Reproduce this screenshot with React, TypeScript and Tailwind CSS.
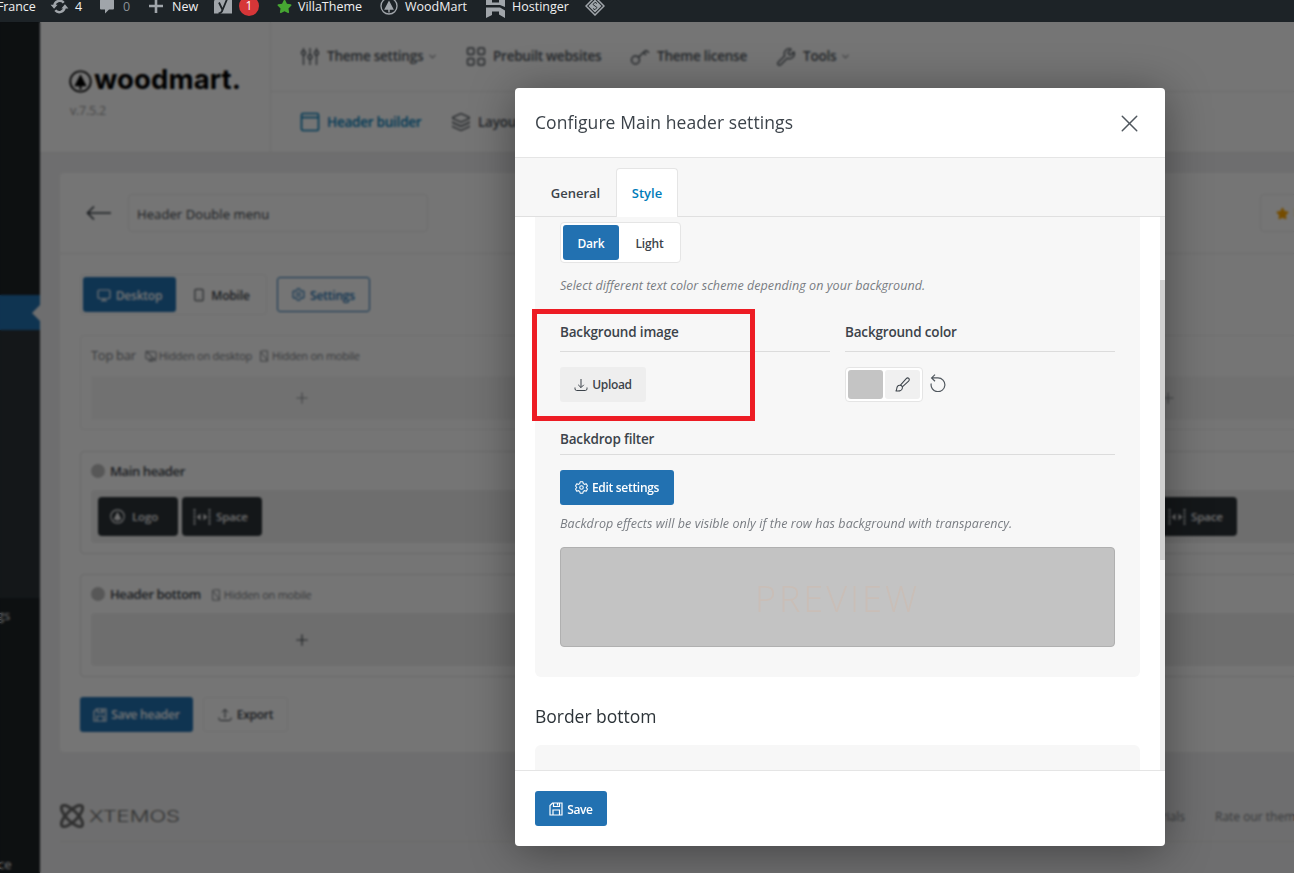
import React from "react";
import { ChevronDown, Layers, Plus, Smartphone, Wrench, X } from "lucide-react";
import { FaStar } from "react-icons/fa";

type P = { className?: string };

const TreeIcon = ({ className = "" }: P) => (
  <svg viewBox="0 0 24 24" className={className} fill="none" stroke="currentColor" strokeWidth="1.800">
    <circle cx="12" cy="12" r="10.7" />
    <path d="M12 4.500 18.500 17H13v3.500h-2V17H5.500z" fill="currentColor" stroke="none" />
  </svg>
);

const GearIcon = ({ className = "" }: P) => (
  <svg viewBox="0 0 24 24" className={className} fill="none" stroke="currentColor" strokeWidth="2" strokeLinejoin="round">
    <path d="M9.500 1.500h5l.8 3.400 2.200 1.300 3.300-1 2.200 4L20.700 12l2.300 2.800-2.200 4-3.300-1-2.200 1.300-.8 3.400h-5l-.8-3.400-2.200-1.300-3.300 1-2.200-4L3.300 12 1 9.200l2.200-4 3.300 1 2.200-1.300z" />
    <circle cx="12" cy="12" r="3.300" />
  </svg>
);

const SaveIcon = ({ className = "" }: P) => (
  <svg viewBox="0 0 14 14" className={className} fill="none" stroke="currentColor" strokeWidth="1.200">
    <path d="M3.500 1h9.500v12H1V3.500zM4.500 1v3.500h6V1M8.500 1.500v2M4 13V8h6.500v5" />
  </svg>
);

const TrayIcon = ({ up = false, className = "" }: P & { up?: boolean }) => (
  <svg viewBox="0 0 14 14" className={className} fill="none" stroke="currentColor" strokeWidth="1">
    <path d="M1 9.500v1.300q0 1.700 1.700 1.700h8.600q1.700 0 1.700-1.700V9.500" />
    {up ? <path d="M7 10V1.500M4 4.300 7 1.300l3 3" /> : <path d="M7 1v8.500M4.200 6.800 7 9.600l2.800-2.800" />}
  </svg>
);

const SlidersIcon = ({ className = "" }: P) => (
  <svg viewBox="0 0 20 20" className={className} fill="none" stroke="currentColor" strokeWidth="1.300">
    <path d="M3.500 1v3M3.500 8v10M10 1v7M10 12v6M16.500 1v3M16.500 8v10" />
    <circle cx="3.500" cy="6" r="2" />
    <circle cx="10" cy="10" r="2" />
    <circle cx="16.500" cy="6" r="2" />
  </svg>
);

const GridIcon = ({ className = "" }: P) => (
  <svg viewBox="0 0 20 20" className={className} fill="none" stroke="currentColor" strokeWidth="1.500">
    <rect x="1.500" y="1" width="6.500" height="6.500" rx="1.500" />
    <rect x="12" y="1" width="6.500" height="6.500" rx="1.500" />
    <rect x="1.500" y="11.500" width="6.500" height="6.500" rx="1.500" />
    <rect x="12" y="11.500" width="6.500" height="6.500" rx="1.500" />
  </svg>
);

const KeyIcon = ({ className = "" }: P) => (
  <svg viewBox="0 0 20 20" className={className} fill="none" stroke="currentColor" strokeWidth="1.500">
    <circle cx="5.500" cy="13" r="4" />
    <path d="M8.500 10.200 14.500 4.500q1.500-1.300 3 0l1.500 1.300M13.500 5.500l2.500 2.500" />
  </svg>
);

const WindowIcon = ({ className = "" }: P) => (
  <svg viewBox="0 0 20 20" className={className} fill="none" stroke="currentColor" strokeWidth="1.600">
    <rect x="1.500" y="1.500" width="17" height="17" rx="1.500" />
    <path d="M1.500 5.500h17" />
  </svg>
);

const MonitorIcon = ({ off = false, className = "" }: P & { off?: boolean }) => (
  <svg viewBox="0 0 14 14" className={className} fill="none" stroke="currentColor" strokeWidth="1.200">
    <rect x="1" y="2" width="12" height="8.500" rx="1.300" />
    <path d="M4 12.700h6M7 10.500v2" />
    {off && <path d="m1 1 12 12" />}
  </svg>
);

const PhoneOffIcon = ({ className = "" }: P) => (
  <svg viewBox="0 0 14 14" className={className} fill="none" stroke="currentColor" strokeWidth="1.100">
    <path d="M3 2.500V13h8V1H4M2.500 1l9 12" />
  </svg>
);

const SpaceIcon = ({ className = "" }: P) => (
  <svg viewBox="0 0 18 18" className={className} fill="none" stroke="currentColor" strokeWidth="1.700">
    <path d="M1.500 1v16M16.500 1v16" strokeDasharray="2.200 1.200" />
    <path d="M7.500 5.500 3.800 9l3.700 3.500zM10.500 5.500 14.200 9l-3.700 3.500z" fill="currentColor" stroke="none" />
  </svg>
);

const BrushIcon = ({ className = "" }: P) => (
  <svg viewBox="0 0 16 16" className={className} fill="none" stroke="currentColor" strokeWidth="1.100" strokeLinejoin="round">
    <path d="M1 14.800c1.300-1 .4-3 1.600-4.800 1.200-1.700 4-1.800 5 0 .9 1.900-.2 4.300-2.600 4.800-1.300.3-2.700.2-4 0z" />
    <path d="M5.800 8.600 12 1.700c1-1 2-.8 2.700-.2.700.8.700 1.800-.2 2.800L7.800 10.500" />
  </svg>
);

const ResetIcon = ({ className = "" }: P) => (
  <svg viewBox="0 0 16 18" className={className} fill="none" stroke="currentColor" strokeWidth="1.200">
    <path d="M1.200 9.500A6.900 6.900 0 1 0 8 3.900H1.800M5 .6 1.600 3.900 5 7.200" />
  </svg>
);

const UpdateIcon = ({ className = "" }: P) => (
  <svg viewBox="0 0 20 16" className={className} fill="none" stroke="currentColor" strokeWidth="2.600">
    <path d="M4.500 7a5.700 5.700 0 0 1 10-3M15.500 9a5.700 5.700 0 0 1-10 3" />
    <path d="M.5 6h7.500L4.200 10.500zM19.500 10H12l3.800-4.500z" fill="currentColor" stroke="none" />
  </svg>
);

const AdminBar = () => (
  <header className="relative z-10 h-[22px] shrink-0 overflow-hidden bg-[#1d2327]">
    <div className="-mt-[9px] flex h-8 items-center whitespace-nowrap text-[12.500px] text-[#f0f0f1]">
      <span className="-ml-[3px] w-[53px] tracking-[-0.1px]">France</span>
      <UpdateIcon className="-mt-[2px] h-[15px] w-[19px] text-[#a0a5aa]" />
      <span className="ml-[6px] w-[25px]">4</span>
      <svg viewBox="0 0 14 14" className="-mt-[2px] h-[15px] w-[14px] text-[#a0a5aa]" fill="currentColor">
        <path d="M1 0h12q1 0 1 1v8q0 1-1 1H9l-4 4v-4H1q-1 0-1-1V1q0-1 1-1z" />
      </svg>
      <span className="ml-[9px] w-[26px] text-[#8c9196]">0</span>
      <svg viewBox="0 0 14 14" className="-mt-[2px] h-[14px] w-[14px] text-[#a0a5aa]">
        <path d="M7 0v14M0 7h14" stroke="currentColor" strokeWidth="2.600" />
      </svg>
      <span className="ml-[9px] w-[42px]">New</span>
      <svg viewBox="0 0 18 18" className="-mt-px size-[18px]">
        <path d="M3.500 1H15L18 0v15.500H0V4Q0 1 3.500 1z" fill="#a0a5aa" />
        <path d="M5 4.500l3.500 7.500L13.500 0M8.500 12q-1.200 3.500-4 3.500" fill="none" stroke="#1d2327" strokeWidth="1.800" />
      </svg>
      <span className="-mt-[2px] ml-[7px] flex size-5 items-center justify-center rounded-full bg-[#d63638] text-[12px] text-white">1</span>
      <FaStar className="-mt-[2px] ml-[18px] size-[15px] text-[#46a532]" />
      <span className="ml-[6px] w-[82px]">VillaTheme</span>
      <TreeIcon className="-mt-[2px] size-[18px] text-[#a0a5aa]" />
      <span className="ml-[7px] w-[81px]">WoodMart</span>
      <svg viewBox="0 0 19 24" className="-mt-[2px] h-[24px] w-[19px] text-[#a0a5aa]" fill="currentColor">
        <path d="M0 0l6 3.500V8.500h7V1.500l6 3.500v8l-5-2H0zM0 24V13.500h14l5 3V24l-6-3.500V17.500H6V21z" />
      </svg>
      <span className="ml-[7px] w-[73px]">Hostinger</span>
      <svg viewBox="0 0 20 20" className="-mt-[2px] size-5" fill="none" stroke="#a0a5aa">
        <path d="M10 1 19 10l-9 9-9-9z" strokeWidth="1.500" />
        <path d="M10 3.500 16.500 10 10 16.500 3.500 10z" fill="#a0a5aa" stroke="none" />
        <path d="M12 7.500 10 6.300 8 8.500l4 3-2 2.200-2-1.200" stroke="#1d2327" strokeWidth="0.900" />
      </svg>
    </div>
  </header>
);

const Sidebar = () => (
  <aside className="flex h-[851px] w-10 shrink-0 flex-col overflow-hidden bg-[#1d2327] text-[13px] text-[#f0f0f1]">
    <div className="h-[273px] shrink-0" />
    <div className="flex h-[35px] shrink-0 items-center justify-end bg-[#2271b1]">
      <svg viewBox="0 0 8 16" className="h-4 w-2" fill="#f0f0f1">
        <path d="M8 0v16L0 8z" />
      </svg>
    </div>
    <div className="h-[268px] shrink-0 bg-[#2c3338]" />
    <div className="flex h-[35px] shrink-0 items-center">
      <span className="-ml-[3px]">gs</span>
    </div>
    <div className="h-[222px] shrink-0" />
    <span className="-ml-[2px] shrink-0 leading-[18px]">ce</span>
  </aside>
);

const NavItem = ({ icon, label, active = false, caret = false, className = "" }: P & { icon: React.ReactNode; label: string; active?: boolean; caret?: boolean }) => (
  <div className={`flex shrink-0 items-center text-[13.500px] font-semibold tracking-[-0.240px] ${active ? "text-[#007cba]" : "text-[#50575e]"} ${className}`}>
    {icon}
    <span className="ml-[7px]">{label}</span>
    {caret && <ChevronDown className="ml-1 size-[11px] text-[#8c8f94]" strokeWidth={2.500} />}
  </div>
);

const ThemeHeader = () => (
  <div className="flex h-[131px] border-b border-[#e8e8e8] bg-white">
    <div className="w-[231px] border-r border-[#ececec] pl-[29px] pt-[40px]">
      <div className="flex h-[38px] items-center text-black">
        <TreeIcon className="mt-[1px] size-[23px] shrink-0" />
        <span className="-mt-[2px] ml-[2px] font-[Inter] text-[27.500px] font-bold tracking-[0.100px]">woodmart.</span>
      </div>
      <div className="pl-px pt-px text-[12.500px] leading-5 tracking-[-0.250px] text-[#9a9a9a]">v.7.5.2</div>
    </div>
    <div className="flex-1 whitespace-nowrap">
      <div className="flex h-[70px] items-center border-b border-[#ececec] pl-[29px]">
        <NavItem className="w-[166px]" icon={<SlidersIcon className="size-5" />} label="Theme settings" caret />
        <NavItem className="w-[164px]" icon={<GridIcon className="size-5" />} label="Prebuilt websites" />
        <NavItem className="w-[146px]" icon={<KeyIcon className="size-5" />} label="Theme license" />
        <NavItem icon={<Wrench className="size-5" strokeWidth={1.600} />} label="Tools" caret />
      </div>
      <div className="flex h-[60px] items-center pl-[29px]">
        <NavItem className="w-[151px]" icon={<WindowIcon className="size-5" />} label="Header builder" active />
        <NavItem icon={<Layers className="size-5" strokeWidth={1.700} />} label="Layouts" />
      </div>
    </div>
  </div>
);

const Tile = ({ icon, label, className = "" }: P & { icon: React.ReactNode; label: string }) => (
  <div className={`flex h-[39px] w-20 shrink-0 items-center rounded bg-[#2c3338] text-[11.500px] font-semibold tracking-[-0.150px] text-[#f0f0f1] ${className}`}>
    {icon}
    {label}
  </div>
);

const HiddenNote = ({ device }: { device: string }) => (
  <span className="flex items-center whitespace-nowrap text-[11px] tracking-[-0.250px] text-[#787c82]">
    {device === "desktop" ? <MonitorIcon off className="mr-[2px] size-3" /> : <PhoneOffIcon className="mr-[2px] size-3" />}
    Hidden on {device}
  </span>
);

const PlusColumns = ({ count, className = "" }: P & { count: number }) => (
  <div className={`grid grid-cols-[422px_434px_442px] ${className}`}>
    {Array.from({ length: count }, (_, n) => (
      <div key={n} className="flex items-center justify-center">
        <Plus className="size-[18px]" strokeWidth={1.500} />
      </div>
    ))}
  </div>
);

const Builder = () => (
  <section className="ml-5 mt-5 h-[579px] w-[1348px] rounded bg-white text-[#3c434a]">
    <div className="flex h-[81px] items-center border-b border-[#ececec] pl-[26px]">
      <svg viewBox="0 0 26 16" className="h-4 w-[26px]" fill="none" stroke="#3c434a" strokeWidth="1.700">
        <path d="M25 8H2M8 1.500 1.500 8 8 14.500" />
      </svg>
      <div className="ml-[16px] flex h-[38px] w-[300px] items-center rounded border border-[#ececec] pl-2 pt-[3px] text-[13px] tracking-[0.100px]">Header Double menu</div>
      <div className="ml-[832px] flex h-[38px] w-[120px] items-center rounded border border-[#ececec] pl-[15px] text-[13px] font-semibold">
        <FaStar className="mr-1 size-[13px] text-[#ffa700]" />
        Rate
      </div>
    </div>
    <div className="flex items-center pl-5 pt-5 text-[12px] font-semibold tracking-[-0.200px]">
      <div className="flex h-[41px] w-[187px] items-center rounded border border-[#f0f0f0] pl-[2px]">
        <div className="flex h-[35px] w-[93px] items-center justify-center rounded-[3px] bg-[#2271b1] text-white">
          <MonitorIcon className="mr-[5px] size-[14px]" />
          <span className="pt-0.5">Desktop</span>
        </div>
        <div className="flex h-[35px] flex-1 items-center justify-center">
          <Smartphone className="mr-[5px] size-[14px]" strokeWidth={1.800} />
          <span className="pt-0.5">Mobile</span>
        </div>
      </div>
      <div className="ml-[10px] flex h-[35px] w-[93px] items-center justify-center rounded-[3px] border-[1.500px] border-[#2271b1] text-[#2271b1]">
        <GearIcon className="mr-[5px] size-[13px]" />
        <span className="pt-0.5">Settings</span>
      </div>
    </div>
    <div className="ml-5 mt-5 h-[95px] w-[1308px] rounded border border-[#f0f0f0] px-[10px]">
      <div className="flex h-[40px] items-center gap-[9px] text-[13px] tracking-[-0.300px]">
        <span className="opacity-70">Top bar</span>
        <HiddenNote device="desktop" />
        <span className="-ml-[3px]">
          <HiddenNote device="mobile" />
        </span>
      </div>
      <PlusColumns count={3} className="h-[44px] bg-[#f7f7f7] text-[#8c8f94]" />
    </div>
    <div className="ml-5 mt-[21px] h-[103px] w-[1308px] rounded border border-[#e4e4e4] px-[10px]">
      <div className="flex h-[38px] items-center text-[13px] font-semibold tracking-[-0.400px]">
        <span className="mr-[5px] size-[14px] rounded-full bg-[#bdbdbd]" />
        <span className="pt-0.5">Main header</span>
      </div>
      <div className="flex h-[53px] items-center gap-1 rounded bg-[#f0f0f0] pl-[7px]">
        <Tile icon={<TreeIcon className="ml-3 mr-[7px] size-[15px]" />} label="Logo" />
        <Tile icon={<SpaceIcon className="ml-[11px] mr-[5px] size-[18px]" />} label="Space" />
        <Tile className="ml-[891px]" icon={<SpaceIcon className="ml-[11px] mr-[5px] size-[18px]" />} label="Space" />
      </div>
    </div>
    <div className="ml-5 mt-5 h-[103px] w-[1308px] rounded border border-[#e4e4e4] px-[10px]">
      <div className="flex h-[38px] items-center text-[13px] font-semibold tracking-[-0.400px]">
        <span className="mr-[5px] size-[14px] rounded-full bg-[#bdbdbd]" />
        <span className="pt-0.5">Header bottom</span>
        <span className="ml-[9px] pt-0.5 font-normal">
          <HiddenNote device="mobile" />
        </span>
      </div>
      <PlusColumns count={1} className="h-[53px] rounded bg-[#f0f0f0]" />
    </div>
    <div className="flex gap-[10px] pl-5 pt-5 text-[12px] font-semibold tracking-[-0.250px]">
      <div className="flex h-[35px] w-[113px] items-center justify-center rounded-[3px] bg-[#2271b1] text-white">
        <SaveIcon className="mr-[4px] size-[14px]" />
        <span className="pt-px">Save header</span>
      </div>
      <div className="flex h-[35px] w-[85px] items-center justify-center rounded-[3px] border border-[#f0f0f0]">
        <TrayIcon up className="mr-[5px] size-[14px]" />
        <span className="pt-px">Export</span>
      </div>
    </div>
  </section>
);

const Footer = () => (
  <footer className="ml-5 flex h-[90px] w-[1348px] items-center border-b border-[#e4e4e4] pt-[39px] text-[12px] text-[#787c82]">
    <svg viewBox="0 0 24 24" className="size-6" fill="none" stroke="#6a6a6a" strokeWidth="3">
      <ellipse cx="12" cy="12" rx="14" ry="5.300" transform="rotate(45 12 12)" />
      <ellipse cx="12" cy="12" rx="14" ry="5.300" transform="rotate(-45 12 12)" />
    </svg>
    <span className="ml-[5px] w-[90px] origin-left scale-x-[1.330] font-[Inter] text-[16.500px] font-light text-[#6a6a6a]">XTEMOS</span>
    <span className="ml-[937px] w-[69px] pt-px text-right">Tutorials</span>
    <span className="ml-[30px] whitespace-nowrap pt-px">Rate our theme</span>
  </footer>
);

const FieldTitle = ({ children }: { children: React.ReactNode }) => (
  <div className="text-[13.500px] font-semibold leading-5 tracking-[-0.180px] text-[#3c434a]">{children}</div>
);

const Modal = () => (
  <div className="absolute left-[515px] top-[88px] flex h-[758px] w-[650px] flex-col overflow-hidden rounded bg-white text-[#3c434a]">
    <div className="flex h-[70px] shrink-0 items-center justify-between border-b border-[#e5e5e5] pl-5 pr-[23px] text-[17.500px] tracking-[0.080px]">
      <span>Configure Main header settings</span>
      <X className="-mr-[2px] mt-px size-[29px] text-[#50575e]" strokeWidth={1.200} />
    </div>
    <div className="flex h-[59px] shrink-0 items-end border-b border-[#e0e0e0] bg-[#f7f7f7] pl-[20px] text-[13px] font-semibold">
      <div className="flex h-[49px] w-[81px] items-center justify-center pt-1">General</div>
      <div className="-mb-px flex h-[49px] w-[62px] items-center justify-center rounded-t border border-b-0 border-[#e5e5e5] bg-white pt-px text-[#007cba]">Style</div>
    </div>
    <div className="flex h-[553px] shrink-0 overflow-hidden">
      <div className="w-[625px] pl-5">
        <div className="h-[460px] rounded-b-md bg-[#f7f7f7] px-[25px] pt-[5px]">
          <div className="flex h-[41px] w-[121px] items-center rounded border border-[#e5e5e5] bg-white pl-[2px] text-[12px] font-semibold tracking-[-0.200px]">
            <div className="flex h-[35px] w-[56px] items-center justify-center rounded-[3px] bg-[#2271b1] pt-0.5 text-white">Dark</div>
            <div className="flex-1 pt-0.5 text-center">Light</div>
          </div>
          <p className="mt-[13px] whitespace-nowrap text-[12.500px] italic leading-5 tracking-[0.065px] text-[#787c82]">Select different text color scheme depending on your background.</p>
          <div className="mt-[26px] grid grid-cols-2 gap-[15px]">
            <div>
              <div className="h-[30px] border-b border-[#dcdcdc]">
                <FieldTitle>Background image</FieldTitle>
              </div>
              <div className="mt-[15px] flex h-[35px] w-[86px] items-center justify-center rounded-[3px] bg-[#eeeeee] text-[12px] font-semibold tracking-[-0.350px]">
                <TrayIcon className="mr-[4px] size-[14px]" />
                <span className="pt-px">Upload</span>
              </div>
            </div>
            <div>
              <div className="h-[30px] border-b border-[#dcdcdc]">
                <FieldTitle>Background color</FieldTitle>
              </div>
              <div className="mt-[15px] flex items-center">
                <div className="flex h-[35px] w-[78px] items-center gap-[2px] rounded border border-[#e5e5e5] bg-white pl-[2px]">
                  <div className="h-[29px] w-[35px] rounded-[3px] bg-[#c4c4c4]" />
                  <div className="flex h-[29px] w-[35px] items-center justify-center rounded-[3px] bg-[#f0f0f0]">
                    <BrushIcon className="size-[15px]" />
                  </div>
                </div>
                <ResetIcon className="-mt-[3px] ml-[7px] h-[18px] w-4 text-[#50575e]" />
              </div>
            </div>
          </div>
          <div className="mt-[27px] h-[26px] border-b border-[#dcdcdc]">
            <FieldTitle>Backdrop filter</FieldTitle>
          </div>
          <div className="mt-[15px] flex h-[35px] w-[114px] items-center justify-center rounded-[3px] bg-[#2271b1] text-[12px] font-semibold tracking-[-0.300px] text-white">
            <GearIcon className="mr-[4px] size-[13px]" />
            <span className="pt-px">Edit settings</span>
          </div>
          <p className="mt-[9px] whitespace-nowrap text-[12.500px] italic leading-5 tracking-[0.065px] text-[#787c82]">Backdrop effects will be visible only if the row has background with transparency.</p>
          <div className="mt-[13px] flex h-[100px] items-center justify-center rounded border border-[#b0b0b0] bg-[#c3c3c3] pt-[4px] text-[36px] font-light tracking-[3px] text-[#c9beb7]">PREVIEW</div>
        </div>
        <h3 className="mt-[25px] text-[17.500px] font-medium leading-7 tracking-[-0.020px] text-[#2c3338]">Border bottom</h3>
        <div className="mt-[15px] h-20 rounded-t-md bg-[#f7f7f7]" />
      </div>
      <div className="ml-auto w-[5px] bg-[#f1f1f1] pt-[63px]">
        <div className="h-[280px] bg-[#d0d0d0]" />
      </div>
    </div>
    <div className="flex flex-1 items-center border-t border-[#e5e5e5] pl-5">
      <div className="flex h-[35px] w-[72px] items-center justify-center rounded-[3px] bg-[#2271b1] text-[12px] font-semibold tracking-[-0.400px] text-white">
        <SaveIcon className="mr-[4px] size-[14px]" />
        <span className="pt-0.5">Save</span>
      </div>
    </div>
  </div>
);

export default function App() {
  return (
    <div className="relative flex h-[873px] w-[1294px] flex-col overflow-hidden bg-[#f0f0f1] font-['Open_Sans','Noto_Sans',sans-serif]">
      <AdminBar />
      <div className="flex flex-1 overflow-hidden">
        <Sidebar />
        <main className="w-[1388px] shrink-0">
          <ThemeHeader />
          <Builder />
          <Footer />
        </main>
      </div>
      <div className="absolute inset-x-0 bottom-0 top-[22px] bg-black/54 backdrop-blur-[0.9px]" />
      <div className="absolute left-[515px] top-[88px] h-[758px] w-[650px] rounded shadow-[0_5px_45px_rgba(0,0,0,0.4)]" />
      <Modal />
      <div className="absolute left-[532px] top-[309px] h-[112px] w-[223px] border-[5px] border-[#ed1c24]" />
    </div>
  );
}
